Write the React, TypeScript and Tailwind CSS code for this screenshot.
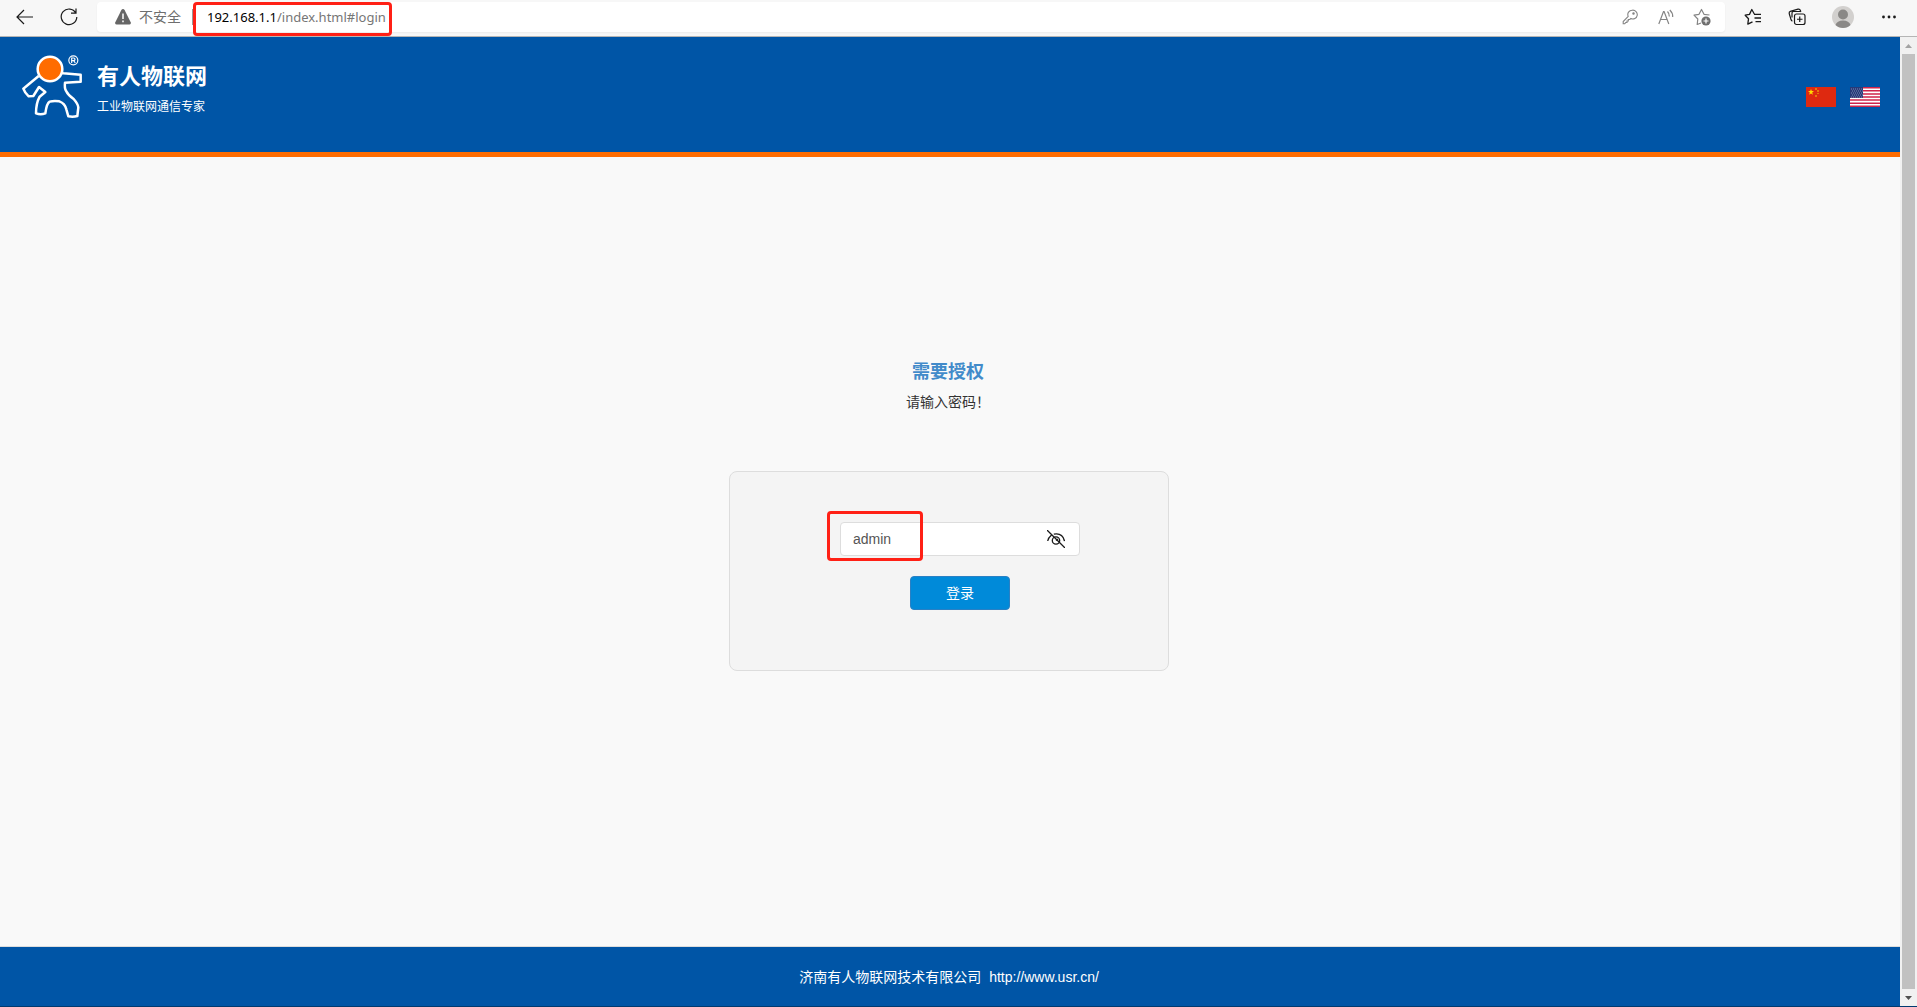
import { useState } from 'react';

function Logo() {
  return (
    <svg className="w-[70px] h-[74px] shrink-0" viewBox="0 0 210 222" fill="none">
      <path
        d="M118 67L136 70L188 74V95L141 98Q139 115 144 122Q150 135 167 147Q180 162 181 172L178 198Q165 202 151 199L145 178Q141 160 124 154Q108 151 95 155Q86 160 82 190Q68 195 54 190Q54 160 65 140L82 126L63 111L46 138L32 139Q20 128 16 116L62 78"
        stroke="#ffffff"
        strokeWidth="7.500"
        strokeLinejoin="round"
      />
      <circle cx="96" cy="57" r="37" fill="#ff6c00" stroke="#ffffff" strokeWidth="7.500" />
      <circle cx="166" cy="31" r="13.500" stroke="#ffffff" strokeWidth="3.500" />
      <path d="M161 39V24H167Q171 24 171 28T167 32H161M167 32L172 39" stroke="#ffffff" strokeWidth="3.500" />
    </svg>
  );
}

function ChinaFlag() {
  return (
    <svg className="w-[30px] h-5" viewBox="0 0 30 20">
      <rect width="30" height="20" fill="#de2910" />
      <path d="M5 2l.8 2.100h2.200L6.200 5.500l.7 2.200L5 6.400 3.100 7.700l.7-2.200L2 4.100h2.200z" fill="#ffde00" />
      <g fill="#e8780c">
        <rect x="9" y="1" width="2" height="2" />
        <rect x="11" y="3" width="2" height="2" />
        <rect x="11" y="6" width="2" height="1" />
        <rect x="9" y="8" width="2" height="2" />
      </g>
    </svg>
  );
}

function UsaFlag() {
  return (
    <svg className="w-[30px] h-5" viewBox="0 0 30 20">
      <rect width="30" height="20" fill="#ffffff" />
      <path
        d="M0 .75h30M0 3.850h30M0 6.950h30M0 10.050h30M0 13.100h30M0 16.200h30M0 19.250h30"
        stroke="#d0234a"
        strokeWidth="1.540"
      />
      <rect width="13" height="10.800" fill="#283a78" />
      <path
        d="M1 2h12M2 4h11M1 6h12M2 8h11M1 10h12"
        stroke="#7c8bb5"
        strokeWidth="1"
        strokeDasharray="1 1"
      />
    </svg>
  );
}

const toolButton = 'flex h-[30px] items-center justify-center';

function BrowserBar() {
  return (
    <div className="flex h-[37px] shrink-0 items-start border-b border-[#b5b5b5] bg-[#f7f7f7] pt-0.5 pl-[3px] pr-1.5">
      <button aria-label="返回" className={`${toolButton} w-11`}>
        <svg className="w-5 h-5" viewBox="0 0 20 20" fill="none" stroke="#1a1a1a" strokeWidth="1.200">
          <path d="M18 10H2.500M9 3L2 10l7 7" />
        </svg>
      </button>
      <button aria-label="刷新" className={`${toolButton} w-11`}>
        <svg className="w-5 h-5" viewBox="0 0 20 20" fill="none" stroke="#1a1a1a" strokeWidth="1.200">
          <path d="M16.800 6A7.800 7.800 0 1 0 17.800 10M17 1.500V6.200H12" />
        </svg>
      </button>

      {/* Address bar */}
      <div className="ml-1.5 mr-1.5 flex h-[30px] flex-1 items-center rounded bg-white pl-[17px] pr-[5px] shadow-xs">
        <svg className="w-[18px] h-[18px]" viewBox="0 0 18 18">
          <path d="M9 1Q10 1 10.600 2L16.800 14.500Q17.300 16.500 15.500 16.500H2.500Q.7 16.500 1.200 14.500L7.400 2Q8 1 9 1z" fill="#666666" />
          <path d="M9 5.500V11M9 12.500V14.300" stroke="#ffffff" strokeWidth="1.500" />
        </svg>
        <span className="ml-[7px] text-sm text-[#6e6e6e]">不安全</span>
        <span className="ml-[11px] h-4 w-px bg-[#9a9a9a]" />
        <div className="relative ml-3.5 flex h-[30px] items-center">
          <div
            role="textbox"
            aria-label="地址"
            contentEditable
            suppressContentEditableWarning
            spellCheck={false}
            className="font-['Noto_Sans',sans-serif] text-[13px] leading-5 text-[#767676] outline-none"
          >
            <span className="text-black">192.168.1.1</span>/index.html#login
          </div>
          <div className="pointer-events-none absolute top-0 -bottom-1 -left-3.5 -right-1.5 rounded border-3 border-[#ff2015]" />
        </div>

        <div className="ml-auto flex text-[#858585]">
          <button aria-label="密码" className={`${toolButton} w-9`}>
            <svg className="w-4 h-4" viewBox="0 0 16 16" fill="none" stroke="currentColor" strokeWidth="1.100">
              <path d="M10.300 1.200a4.400 4.400 0 1 1-1.400 8.300L7.800 10.500H6.300V12H5v1.500H3.800L2.800 14.700H1.200V12.500L6.200 7.400A4.400 4.400 0 0 1 10.300 1.200z" />
              <circle cx="11.500" cy="4.500" r=".7" fill="currentColor" />
            </svg>
          </button>
          <button aria-label="大声朗读" className={`${toolButton} w-9`}>
            <svg className="w-4 h-4" viewBox="0 0 16 16" fill="none" stroke="currentColor" strokeWidth="1.200">
              <path d="M.8 15L5.500 2.500h.6L10.800 15M2.500 10.500h6.600M9.500 2.500Q11.500 4.500 11.300 7.500M11.800 1Q15 4 14.700 8" />
            </svg>
          </button>
          <button aria-label="添加到收藏夹" className={`${toolButton} w-9`}>
            <svg className="w-[18px] h-[18px]" viewBox="0 0 18 18" fill="none" stroke="currentColor" strokeWidth="1.200">
              <path d="M8 15L4.200 16.500 4.800 11 1 7.200 6 6.300 8.500 1.500 11 6.300 16.500 7" strokeLinejoin="round" />
              <circle cx="13" cy="13" r="4.600" fill="#6f6f6f" stroke="none" />
              <path d="M13 10.500v5M10.500 13h5" stroke="#ffffff" />
            </svg>
          </button>
        </div>
      </div>

      <button aria-label="收藏夹" className={`${toolButton} w-11`}>
        <svg className="w-[18px] h-[18px]" viewBox="0 0 18 18" fill="none" stroke="#1a1a1a" strokeWidth="1.300">
          <path d="M10.300 6L7.800 1.500 5.500 6.400 1.200 7.200 4.500 10.800 3.800 16.200 8.500 13.800M10 6.400H17M10.500 10H17M11.500 13.600H17" strokeLinejoin="round" />
        </svg>
      </button>
      <button aria-label="集锦" className={`${toolButton} w-11`}>
        <svg className="w-[18px] h-[18px]" viewBox="0 0 18 18" fill="none" stroke="#1a1a1a" strokeWidth="1.200">
          <rect x="6.500" y="6" width="10.500" height="10.500" rx="2" />
          <path d="M11.750 8.500v5.500M9 11.250h5.500M4.500 13Q3.500 13 3.100 11.800L1.200 5.500Q.9 3.800 2.300 3.400L10 1.200Q11.800 .8 12.400 2.500L12.800 4M4 9.500V5Q4 3.500 5.500 3.300L12 3.500" />
        </svg>
      </button>
      <button aria-label="个人资料" className={`${toolButton} w-12`}>
        <svg className="w-[22px] h-[22px]" viewBox="0 0 22 22">
          <circle cx="11" cy="11" r="11" fill="#d2d0ce" />
          <circle cx="11" cy="8.500" r="5" fill="#8a8886" />
          <path d="M3.500 19Q5 14.500 11 14.500T18.500 19Q15.500 22 11 22T3.500 19z" fill="#8a8886" />
        </svg>
      </button>
      <button aria-label="设置及其他" className={`${toolButton} w-11`}>
        <svg className="w-4 h-4" viewBox="0 0 16 16" fill="#1a1a1a">
          <circle cx="2.500" cy="8" r="1.400" />
          <circle cx="8" cy="8" r="1.400" />
          <circle cx="13.500" cy="8" r="1.400" />
        </svg>
      </button>
    </div>
  );
}

function Scrollbar() {
  return (
    <div className="flex w-[17px] shrink-0 flex-col items-stretch bg-[#f1f1f1]">
      <button aria-label="向上滚动" className="flex h-[17px] items-center justify-center">
        <svg className="w-[7px] h-1" viewBox="0 0 7 4" fill="#a3a3a3">
          <path d="M0 4L3.500 0 7 4z" />
        </svg>
      </button>
      <div className="mx-0.5 flex-1 bg-[#c1c1c1]" />
      <button aria-label="向下滚动" className="flex h-[17px] items-center justify-center">
        <svg className="w-[7px] h-1" viewBox="0 0 7 4" fill="#505050">
          <path d="M0 0L3.500 4 7 0z" />
        </svg>
      </button>
    </div>
  );
}

export default function App() {
  const [password, setPassword] = useState('admin');
  const [visible, setVisible] = useState(true);

  return (
    <div className="flex h-screen flex-col overflow-hidden border-b border-[#003a70] font-['Liberation_Sans','Noto_Sans_CJK_SC',sans-serif] text-sm">
      <BrowserBar />

      <div className="flex min-h-0 flex-1">
        <div className="flex flex-1 flex-col bg-[#f9f9f9]">
          <header className="flex h-[120px] shrink-0 items-start justify-between border-b-5 border-[#ff6c00] bg-[#0055a6] pl-[18px] pr-5">
            <div className="flex items-start pt-[13px] text-white">
              <Logo />
              <div className="ml-[9px] pt-[13px]">
                <h1 className="text-[22px] leading-7 font-bold">有人物联网</h1>
                <p className="mt-0.5 text-xs leading-7">工业物联网通信专家</p>
              </div>
            </div>
            <div className="mt-[50px] flex gap-3.5">
              <button aria-label="中文"><ChinaFlag /></button>
              <button aria-label="English"><UsaFlag /></button>
            </div>
          </header>

          {/* Login */}
          <main className="flex flex-1 flex-col items-center pt-[201px] pr-0.5">
            <h2 className="pr-0.5 text-lg leading-7 font-bold text-[#428bca]">需要授权</h2>
            <p className="mt-1 pr-0.5 leading-6 text-[#333333]">请输入密码！</p>

            <form
              onSubmit={(e) => e.preventDefault()}
              className="mt-[57px] flex h-[200px] w-[440px] flex-col items-center rounded-lg border border-[#dddddd] bg-[#f4f4f4] pt-[50px] pl-[22px]"
            >
              <div className="relative w-60">
                <input
                  type={visible ? 'text' : 'password'}
                  aria-label="密码"
                  value={password}
                  onChange={(e) => setPassword(e.target.value)}
                  className="block h-[34px] w-full rounded border border-[#dddddd] bg-white pl-3 pr-12 text-sm text-[#555555] outline-none"
                />
                <button
                  type="button"
                  aria-label="显示或隐藏密码"
                  onClick={() => setVisible(!visible)}
                  className="absolute top-2 right-[15px]"
                >
                  <svg className="w-[18px] h-[18px]" viewBox="0 0 18 18" fill="none" stroke="#1a1a1a" strokeWidth="1.300">
                    <path d="M0 0L18 18M.7 11Q1.300 7.800 4.300 5.300M6.800 4.200Q15.500 2.500 17.500 11" />
                    <circle cx="9" cy="10.500" r="3.700" />
                    <path d="M9 10.500l2-1.500" />
                  </svg>
                </button>
                <div className="pointer-events-none absolute -top-[11px] -left-[13px] h-[50px] w-24 rounded border-3 border-[#ff2015]" />
              </div>
              <button type="submit" className="mt-5 h-[34px] w-[100px] rounded border border-[#2a80c4] bg-[#008ad9] text-white">
                登录
              </button>
            </form>
          </main>

          <footer className="flex h-[60px] shrink-0 items-center justify-center gap-2 border-t border-[#dddddd] bg-[#0055a6] pr-0.5 text-white">
            <span>济南有人物联网技术有限公司</span>
            <a href="http://www.usr.cn/">http://www.usr.cn/</a>
          </footer>
        </div>
        <Scrollbar />
      </div>
    </div>
  );
}
